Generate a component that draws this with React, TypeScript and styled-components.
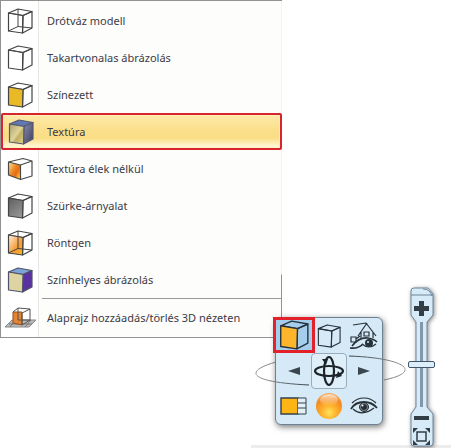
import React, { useState } from "react";
import styled, { createGlobalStyle, css } from "styled-components";

const GlobalStyle = createGlobalStyle`
  * { box-sizing: border-box; }
  body { margin: 0; background: #fff; overflow: hidden; }
  button { padding: 0; border: 0; background: none; font: inherit; color: inherit; cursor: pointer; }
  svg { display: block; }
`;

const Page = styled.div`
  display: grid;
  min-height: 100vh;
  font-family: "Noto Sans", "Segoe UI", sans-serif;
  font-size: 11px;
  color: #3b3b46;
`;

const Menu = styled.nav`
  grid-area: 1 / 1;
  place-self: start;
  width: 282px;
  padding: 1px 0;
  border: 1px solid #929292;
  border-right: 0;
  background:
    linear-gradient(#f3f3f3 273px, #929292 274px) right / 1px 100% no-repeat,
    linear-gradient(90deg, #fff 37px, #e6e6e6 37px, #e6e6e6 38px, #fdfdfc 38px);
`;

const MenuItem = styled.button<{ $active?: boolean }>`
  display: grid;
  grid-template-columns: 38px 1fr;
  align-items: center;
  column-gap: 8px;
  width: 100%;
  height: 37px;
  text-align: left;
  line-height: 16px;
  white-space: nowrap;
  ${(p) =>
    p.$active &&
    css`
      border: 2px solid #d8242c;
      border-radius: 2px;
      grid-template-columns: 36px 1fr;
      background: linear-gradient(#fde9a8, #fbdf8c 45%, #fade84 70%, #fff6d6 95%);
      box-shadow: inset 0 0 0 1px #fff0b8;
    `}
`;

const IconSlot = styled.span`
  display: grid;
  justify-content: center;
`;

const Separator = styled.hr`
  height: 1px;
  margin: 0 0 0 41px;
  border: 0;
  background: #9a9a9a;
`;

const Dock = styled.section`
  grid-area: 1 / 1;
  place-self: end;
  display: flex;
  align-items: flex-end;
  gap: 24px;
  width: 200px;
  padding: 0 15px 0 24px;
  border-bottom: 3px solid #ededed;
`;

const Panel = styled.div`
  position: relative;
  flex: 1;
  display: grid;
  grid-template: repeat(3, 1fr) / repeat(3, 1fr);
  height: 108px;
  margin-bottom: 20px;
  border: 1px solid #6e8193;
  border-radius: 6px;
  background: #d5e9f6;
  box-shadow: 1px 2px 6px #0008;
`;

const Tool = styled.button<{ $selected?: boolean; $framed?: boolean }>`
  display: grid;
  place-items: center;
  ${(p) =>
    p.$selected &&
    css`
      margin: -1px -4px 0 -3px;
      border: 3px solid #e3212b;
      background: #a5cdec;
    `}
  ${(p) =>
    p.$framed &&
    css`
      border: 1px solid #97adbd;
      border-radius: 4px;
      background: #deeff9;
    `}
`;

const Orbit = styled.svg`
  position: absolute;
  left: -23px;
  top: 34px;
  pointer-events: none;
`;

const ZoomBar = styled.div`
  position: relative;
  display: flex;
  flex-direction: column;
  align-items: center;
  width: 29px;
  height: 161px;
  margin-bottom: -3px;
  flex: none;
`;

const BarShape = styled.svg`
  position: absolute;
  inset: 0;
  filter: drop-shadow(1px 1px 2px #0007);
  pointer-events: none;
`;

const BarButton = styled.button<{ $height: number }>`
  position: relative;
  display: grid;
  place-items: center;
  width: 22px;
  height: ${(p) => p.$height}px;
`;

const ZoomRange = styled.input`
  position: relative;
  flex: 1;
  min-height: 0;
  width: 28px;
  margin: 0;
  writing-mode: vertical-lr;
  appearance: none;
  background: none;
  &::-webkit-slider-thumb {
    appearance: none;
    width: 27px;
    height: 7px;
    border: 1px solid #42566b;
    border-radius: 2px;
    background: #dceefa;
  }
`;

type CubeProps = {
  front?: string;
  top?: string;
  side?: string;
  hidden?: boolean;
  stroke?: string;
  size?: number;
};

function Cube({ front = "none", top = "none", side = "none", hidden, stroke = "#444", size = 26 }: CubeProps) {
  return (
    <svg width={size} height={size} viewBox="0 0 26 26" stroke={stroke} strokeWidth="1.2" strokeLinejoin="round" aria-hidden="true">
      <defs>
        <linearGradient id="texture" x2="1" y2="1">
          <stop offset="0" stopColor="#aaa16e" /><stop offset=".5" stopColor="#e0d49a" /><stop offset=".62" stopColor="#bfae66" /><stop offset="1" stopColor="#e3d384" />
        </linearGradient>
        <linearGradient id="metal" x2="1" y2="1">
          <stop offset="0" stopColor="#8a90b4" /><stop offset="1" stopColor="#3d3d58" />
        </linearGradient>
        <linearGradient id="grey" y2="1" x2=".6">
          <stop stopColor="#5f5f5f" /><stop offset="1" stopColor="#929292" />
        </linearGradient>
        <linearGradient id="xray" x2="1" y2="1">
          <stop stopColor="#fff0dd" /><stop offset=".6" stopColor="#f49a35" /><stop offset="1" stopColor="#ffbd17" />
        </linearGradient>
      </defs>
      <path d="M1.500 5 11 1 25 3.500 16 7.500Z" fill={top} />
      <path d="M16 7.500 25 3.500V20L15.500 25Z" fill={side} />
      <path d="M1.500 5 16 7.500 15.500 25 1.500 23Z" fill={front} />
      {hidden && <path d="M11 1V18.500L1.500 23M11 18.500 25 20" fill="none" strokeWidth="1" />}
    </svg>
  );
}

function CornerCube() {
  return (
    <svg width="26" height="24" viewBox="0 0 26 24" stroke="#484848" strokeWidth="1.200" strokeLinejoin="round" aria-hidden="true">
      <defs>
        <linearGradient id="flame" x2="1" y2=".8">
          <stop offset="0" stopColor="#ffe3b5" /><stop offset=".45" stopColor="#ee8e28" /><stop offset=".7" stopColor="#e46c12" /><stop offset="1" stopColor="#ffc53d" />
        </linearGradient>
      </defs>
      <path d="M1.500 5 13.500 8V22.500L1.500 18Z" fill="url(#flame)" />
      <path d="M1.500 5 16 1.500 25 4V19L13.500 22.500M13.500 8 25 4" fill="none" />
    </svg>
  );
}

function PlanCube() {
  return (
    <svg width="31" height="21" viewBox="0 0 31 21" strokeWidth="1" strokeLinejoin="round" aria-hidden="true">
      <path d="M7 13H31L24 20H0Z" fill="#bbb" stroke="#888" />
      <path d="M4 17H27M10 13 5 20M26 13 20 20" stroke="#777" fill="none" />
      <path d="M8 5H17V18L8 16Z" fill="#e68431" stroke="#8e4f27" />
      <path d="M8 5 13 1 25 2 17 6V18L25 13V2M13 1V13H25" fill="none" stroke="#555" />
    </svg>
  );
}

function HouseEye() {
  return (
    <svg width="30" height="28" viewBox="0 0 30 28" fill="none" stroke="#28323b" strokeWidth="1.200" aria-hidden="true">
      <path d="M4 3 17 1M17 1 27 14M18 1 9 14M12 10V16M24 10V16M2 15H7V20H2ZM7 17 11 14M15 10H20V14H15Z" />
      <path d="M1 26Q9 27 14 22M3 24Q10 15 19 16Q25 17 28 20" strokeWidth="1.600" />
      <path d="M13 22Q20 28 27 22" />
      <circle cx="20" cy="21" r="4" fill="#28323b" stroke="none" />
      <circle cx="19" cy="20" r="1" fill="#d5e9f6" stroke="none" />
    </svg>
  );
}

function Eye() {
  return (
    <svg width="28" height="19" viewBox="0 0 28 19" fill="none" stroke="#252e35" aria-hidden="true">
      <path d="M2 6Q7 1 14 1Q21 1 26 6" strokeWidth="1.200" />
      <path d="M1 12Q5 5 14 5Q22 5 27 11" strokeWidth="1.800" />
      <path d="M3 12Q12 20 24 11" strokeWidth="1.200" />
      <circle cx="14" cy="10" r="4.500" fill="#77828a" />
      <circle cx="14" cy="10" r="2.500" fill="#252e35" />
      <circle cx="12.500" cy="8.500" r="1" fill="#fff" stroke="none" />
    </svg>
  );
}

function OrbitIcon() {
  return (
    <svg width="32" height="32" viewBox="0 0 32 32" fill="none" stroke="#1c2329" strokeWidth="2.200" aria-hidden="true">
      <ellipse cx="16" cy="16" rx="14" ry="5" />
      <ellipse cx="16" cy="16" rx="5" ry="14" />
      <path d="M9 4 15 4 13 10ZM25 16 29 21 23 23Z" fill="#1c2329" stroke="none" />
    </svg>
  );
}

function Arrow({ flip }: { flip?: boolean }) {
  return (
    <svg width="14" height="10" viewBox="0 0 14 10" aria-hidden="true">
      <path d={flip ? "M1 1 13 5 1 9Z" : "M13 1V9L1 5Z"} fill="#394650" />
    </svg>
  );
}

function Palette() {
  return (
    <svg width="27" height="18" viewBox="0 0 27 18" stroke="#33404b" aria-hidden="true">
      <path d="M1 1H18V17H1Z" fill="#fdb515" strokeWidth="1.400" />
      <path d="M18 1H26V17H18M18 6H26M18 11H26" fill="#e2f0fa" />
    </svg>
  );
}

function Sphere() {
  return (
    <svg width="28" height="28" viewBox="0 0 28 28" aria-hidden="true">
      <defs>
        <radialGradient id="glow" cx=".5" cy=".75" r=".75">
          <stop stopColor="#ffe45c" /><stop offset=".35" stopColor="#ffb52e" /><stop offset=".75" stopColor="#f28a22" /><stop offset="1" stopColor="#f7a653" />
        </radialGradient>
        <linearGradient id="shine" y2="1" x2="0">
          <stop stopColor="#fff" stopOpacity=".7" /><stop offset="1" stopColor="#fff" stopOpacity="0" />
        </linearGradient>
      </defs>
      <circle cx="14" cy="14" r="13" fill="url(#glow)" />
      <ellipse cx="14" cy="8" rx="9" ry="6" fill="url(#shine)" />
    </svg>
  );
}

const modes = [
  { label: "Drótváz modell", icon: <Cube hidden /> },
  { label: "Takartvonalas ábrázolás", icon: <Cube /> },
  { label: "Színezett", icon: <Cube front="#e9b928" /> },
  { label: "Textúra", icon: <Cube front="url(#texture)" top="#5f78ad" side="url(#metal)" stroke="#555972" /> },
  { label: "Textúra élek nélkül", icon: <CornerCube /> },
  { label: "Szürke-árnyalat", icon: <Cube front="url(#grey)" /> },
  { label: "Röntgen", icon: <Cube hidden front="url(#xray)" /> },
  { label: "Színhelyes ábrázolás", icon: <Cube front="#ded3a3" top="#7da4d8" side="#5931a0" stroke="#4f5268" /> },
];

export default function App() {
  const [mode, setMode] = useState("Textúra");
  return (
    <Page>
      <GlobalStyle />
      <Menu aria-label="Ábrázolás">
        {modes.map((m) => (
          <MenuItem key={m.label} $active={m.label === mode} onClick={() => setMode(m.label)}>
            <IconSlot>{m.icon}</IconSlot>
            {m.label}
          </MenuItem>
        ))}
        <Separator />
        <MenuItem>
          <IconSlot><PlanCube /></IconSlot>
          Alaprajz hozzáadás/törlés 3D nézeten
        </MenuItem>
      </Menu>
      <Dock>
        <Panel>
          <Tool $selected aria-label="Színezett"><Cube size={30} front="#fdb52b" stroke="#26323c" /></Tool>
          <Tool aria-label="Takartvonalas"><Cube size={24} stroke="#26323c" /></Tool>
          <Tool aria-label="Nézet"><HouseEye /></Tool>
          <Tool aria-label="Balra"><Arrow /></Tool>
          <Tool $framed aria-label="Forgatás"><OrbitIcon /></Tool>
          <Tool aria-label="Jobbra"><Arrow flip /></Tool>
          <Tool aria-label="Színek"><Palette /></Tool>
          <Tool aria-label="Anyag"><Sphere /></Tool>
          <Tool aria-label="Láthatóság"><Eye /></Tool>
          <Orbit width="154" height="34" viewBox="0 0 154 34" fill="none" aria-hidden="true">
            <defs>
              <linearGradient id="trail-left" gradientUnits="userSpaceOnUse" x1="3" x2="56" y1="0" y2="0">
                <stop stopColor="#999" /><stop offset="1" stopColor="#37434c" />
              </linearGradient>
              <linearGradient id="trail-right" gradientUnits="userSpaceOnUse" x1="96" x2="152" y1="0" y2="0">
                <stop stopColor="#37434c" /><stop offset="1" stopColor="#999" />
              </linearGradient>
            </defs>
            <path d="M23 10C-9 19 -6 30 56 33" stroke="url(#trail-left)" />
            <path d="M96 4C153 6 170 20 131 28" stroke="url(#trail-right)" />
          </Orbit>
        </Panel>
        <ZoomBar>
          <BarShape width="29" height="161" viewBox="0 0 29 161" aria-hidden="true">
            <path d="M7 1H21L26 7V28L20 35V120L26 127V156Q26 159 23 159H7Q4 159 4 156V127L9 120V35L4 28V4Q4 1 7 1Z" fill="#d6eaf7" stroke="#6f8597" />
            <path d="M14.500 35V120" stroke="#8198aa" strokeWidth="3" />
            <path d="M4 8H26M16 2Q23 2 25 9" stroke="#6f8597" fill="none" />
          </BarShape>
          <BarButton $height={42} aria-label="Nagyítás">
            <svg width="15" height="15" viewBox="0 0 15 15" aria-hidden="true"><path d="M5 0H10V5H15V10H10V15H5V10H0V5H5Z" fill="#333d45" /></svg>
          </BarButton>
          <ZoomRange type="range" aria-label="Nagyítás mértéke" defaultValue={43} />
          <BarButton $height={13} aria-label="Kicsinyítés">
            <svg width="15" height="4" viewBox="0 0 15 4" aria-hidden="true"><path d="M0 0H15V4H0Z" fill="#333d45" /></svg>
          </BarButton>
          <BarButton $height={24} aria-label="Teljes nézet">
            <svg width="17" height="17" viewBox="0 0 17 17" fill="#333d45" aria-hidden="true">
              <path d="M0 0H5L0 5ZM17 0V5L12 0ZM0 17V12L5 17ZM17 17H12L17 12Z" />
              <path d="M4 4H13V13H4Z" fill="none" stroke="#333d45" strokeWidth="1.500" />
            </svg>
          </BarButton>
        </ZoomBar>
      </Dock>
    </Page>
  );
}
